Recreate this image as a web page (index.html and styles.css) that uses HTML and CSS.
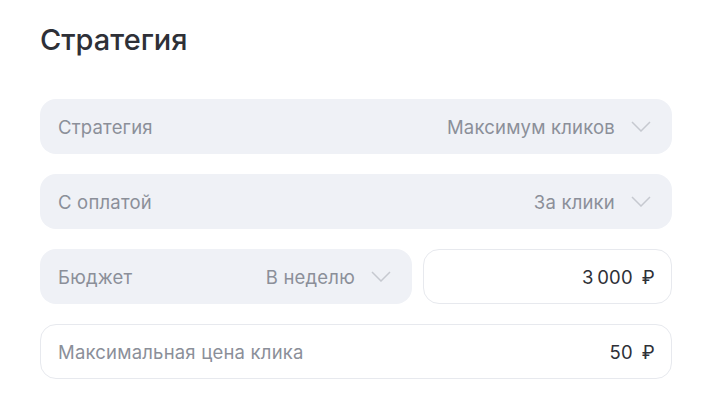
FILE: index.html
```html
<!DOCTYPE html>
<html lang="ru">
<head>
    <meta charset="UTF-8">
    <meta name="viewport" content="width=device-width, initial-scale=1.0">
    <title>Стратегия</title>
    <link rel="stylesheet" href="styles.css">
</head>
<body>

    <!-- Strategy block -->
    <section class="strategy">
        <h2 class="strategy-title">Стратегия</h2>

        <div class="field field-select">
            <span class="field-label">Стратегия</span>
            <span class="field-value">Максимум кликов</span>
            <svg class="chevron" viewBox="0 0 20 11"><path d="M1 1l9 9 9-9"/></svg>
        </div>

        <div class="field field-select">
            <span class="field-label">С оплатой</span>
            <span class="field-value">За клики</span>
            <svg class="chevron" viewBox="0 0 20 11"><path d="M1 1l9 9 9-9"/></svg>
        </div>

        <div class="field-row">
            <div class="field field-select field-half">
                <span class="field-label">Бюджет</span>
                <span class="field-value">В неделю</span>
                <svg class="chevron" viewBox="0 0 20 11"><path d="M1 1l9 9 9-9"/></svg>
            </div>
            <div class="field field-input field-budget">
                <span class="field-amount">3&#8201;000</span>
                <span class="currency">₽</span>
            </div>
        </div>

        <div class="field field-input">
            <span class="field-label">Максимальная цена клика</span>
            <span class="field-amount">50</span>
            <span class="currency">₽</span>
        </div>
    </section>

</body>
</html>
```

FILE: styles.css
```css
body {
    margin: 0;
    padding: 0;
    background-color: #fff;
    font-family: Inter, "Noto Sans", Arial, sans-serif;
    color: #2e3037;
}

.strategy {
    width: 632px;
    padding: 22px 0 0 40px;
    display: flex;
    flex-direction: column;
    gap: 20px;
}

.strategy-title {
    margin: 0 0 21px;
    font-size: 29px;
    font-weight: 500;
    line-height: 36px;
    color: #2e3037;
}

.field {
    height: 55px;
    box-sizing: border-box;
    border-radius: 16px;
    padding: 0 21px 0 18px;
    display: flex;
    align-items: center;
    font-size: 18.5px;
    letter-spacing: 0.2px;
}

.field-select {
    background-color: #eff1f6;
}

.field-input {
    background-color: #fff;
    border: 1px solid #e7e9ee;
    padding: 0 16px 0 17px;
}

.field-label {
    color: #8b8f99;
    flex: 1;
}

.field-value {
    color: #8b8f99;
}

.chevron {
    width: 20px;
    height: 11px;
    margin-left: 16px;
    fill: none;
    stroke: #c6c9d0;
    stroke-width: 1.5;
}

.field-row {
    display: flex;
    gap: 11px;
}

.field-half {
    width: 372px;
}

.field-budget {
    flex: 1;
    justify-content: flex-end;
}

.field-amount {
    color: #2e3037;
}

.currency {
    margin-left: 9px;
    color: #2e3037;
}
```
